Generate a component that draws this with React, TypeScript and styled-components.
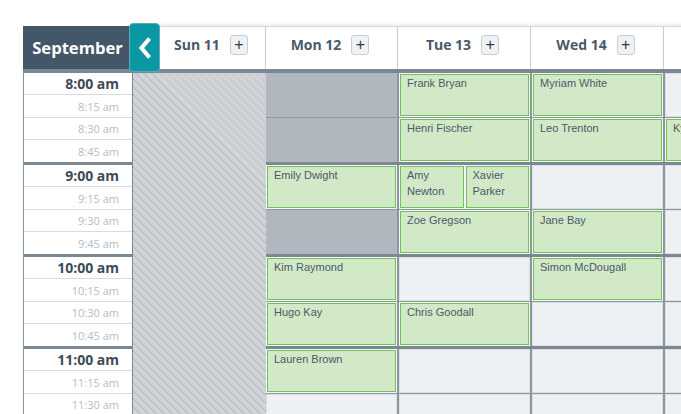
import React from "react";
import styled, { createGlobalStyle } from "styled-components";

const GlobalStyle = createGlobalStyle`
  html, body { margin: 0; padding: 0; background: #ffffff; }
  * { box-sizing: border-box; }
`;

const Page = styled.div`
  width: 681px;
  height: 414px;
  overflow: hidden;
  padding: 26px 0 0 23px;
  font-family: "Open Sans", "Liberation Sans", sans-serif;
`;

const Calendar = styled.div`
  display: flex;
  flex-direction: column;
  width: max-content;
`;

const HeaderRow = styled.div`
  display: flex;
  height: 47px;
  border-bottom: 4px solid #7b8793;
`;

const MonthCell = styled.div`
  width: 106px;
  flex-shrink: 0;
  background: #445768;
  color: #ffffff;
  font-weight: 700;
  font-size: 16.6px;
  display: flex;
  align-items: center;
  justify-content: center;
  padding-left: 3px;
`;

const NavButton = styled.button`
  position: relative;
  z-index: 2;
  flex-shrink: 0;
  align-self: flex-start;
  width: 31px;
  height: 49px;
  margin-top: -3px;
  padding: 0;
  border: 1px solid #5fa9b0;
  border-radius: 4px;
  background: #0a98a4;
  display: flex;
  align-items: center;
  justify-content: center;
  cursor: pointer;
`;

const ChevronIcon = styled.svg`
  display: block;
  width: 18px;
  height: 26px;
  flex-shrink: 0;
`;

const DayHeader = styled.div<{ $width: number }>`
  width: ${(p) => p.$width}px;
  flex-shrink: 0;
  background: #ffffff;
  border-top: 1px solid #d3d7db;
  border-right: 1px solid #cdd2d6;
  box-shadow: 0 -2px 3px rgba(0, 0, 0, 0.07), 1px 0 0 #eef0f2;
  display: flex;
  align-items: center;
  justify-content: center;
  gap: 10px;
  padding: 0 3px 7px 0;
  color: #4a5968;
  font-weight: 700;
  font-size: 14px;
`;

const AddButton = styled.span`
  width: 18px;
  height: 20px;
  border: 1px solid #c9ced3;
  border-radius: 3px;
  background: #eff2f4;
  color: #2f3a45;
  font-family: "Liberation Sans", Arial, sans-serif;
  font-weight: 400;
  font-size: 16px;
  line-height: 17px;
  text-align: center;
`;

const Body = styled.div`
  display: flex;
  align-items: stretch;
`;

const TimeColumn = styled.div`
  width: 110px;
  flex-shrink: 0;
  background: #ffffff;
  border-left: 1px solid #8a949e;
  border-right: 1px solid #7b8793;
  display: flex;
  flex-direction: column;
`;

const HourBlock = styled.div<{ $first: boolean }>`
  display: flex;
  flex-direction: column;
  border-top: ${(p) => (p.$first ? "0" : "3px solid #7b8793")};
`;

const Slot = styled.div<{ $h: number; $last: boolean; $hour: boolean }>`
  height: ${(p) => p.$h}px;
  border-bottom: ${(p) => (p.$last ? "0" : "1px solid #d9dcdf")};
  display: flex;
  align-items: center;
  justify-content: flex-end;
  padding-right: 13px;
  font-size: ${(p) => (p.$hour ? "14px" : "11px")};
  font-weight: ${(p) => (p.$hour ? 700 : 400)};
  color: ${(p) => (p.$hour ? "#3e4b58" : "#b7bbc0")};
  white-space: nowrap;
`;

const ClosedColumn = styled.div`
  width: 133px;
  flex-shrink: 0;
  background: repeating-linear-gradient(
    45deg,
    #d0d4d8 0px,
    #d0d4d8 4.8px,
    #bcc1c6 4.8px,
    #bcc1c6 5.66px
  );
`;

const DayColumn = styled.div`
  width: 133px;
  flex-shrink: 0;
  background: #8e969d;
  display: flex;
  flex-direction: column;
`;

const HalfRow = styled.div`
  display: flex;
  flex-direction: column;
  gap: 1px;
`;

type Kind = "empty" | "blocked" | "event";

const Cell = styled.div<{ $kind: Kind }>`
  width: 131px;
  height: 44px;
  display: flex;
  gap: 2px;
  padding: ${(p) => (p.$kind === "event" ? "1px" : "0")};
  background: ${(p) =>
    p.$kind === "blocked" ? "#b1b7be" : p.$kind === "event" ? "#f4f6f7" : "#eef1f4"};
  border: ${(p) => (p.$kind === "empty" ? "1px solid #dce0e3" : "0")};
`;

const Event = styled.div`
  flex: 1;
  min-width: 0;
  background: #d1e9c6;
  border: 1px solid #72c05a;
  padding: 0 6px;
  font-family: "Liberation Sans", Arial, sans-serif;
  font-size: 11px;
  line-height: 16px;
  color: #4b5a69;
  overflow: hidden;
`;

const Chevron = () => (
  <ChevronIcon viewBox="0 0 18 26" aria-hidden="true">
    <polyline
      points="13.5,3.5 5.5,13 13.5,22.5"
      fill="none"
      stroke="#ffffff"
      strokeWidth="4.2"
      strokeLinecap="butt"
      strokeLinejoin="miter"
    />
  </ChevronIcon>
);

const hours = ["8", "9", "10", "11"];
const quarters = ["00", "15", "30", "45"];
const slotHeights = [22, 23, 22, 22];

type CellData = { kind: Kind; names?: string[] };
const E = (...names: string[]): CellData => ({ kind: "event", names });
const X: CellData = { kind: "empty" };
const B: CellData = { kind: "blocked" };

const days: { label: string; width: number; cells: CellData[] }[] = [
  {
    label: "Mon 12",
    width: 132,
    cells: [B, B, E("Emily Dwight"), B, E("Kim Raymond"), E("Hugo Kay"), E("Lauren Brown"), X],
  },
  {
    label: "Tue 13",
    width: 133,
    cells: [
      E("Frank Bryan"),
      E("Henri Fischer"),
      E("Amy Newton", "Xavier Parker"),
      E("Zoe Gregson"),
      X,
      E("Chris Goodall"),
      X,
      X,
    ],
  },
  {
    label: "Wed 14",
    width: 133,
    cells: [
      E("Myriam White"),
      E("Leo Trenton"),
      X,
      E("Jane Bay"),
      E("Simon McDougall"),
      X,
      X,
      X,
    ],
  },
  {
    label: "Thu 15",
    width: 133,
    cells: [X, E("Kyle Simmons"), X, X, X, X, X, X],
  },
];

export default function App() {
  return (
    <>
      <GlobalStyle />
      <Page>
        <Calendar>
          <HeaderRow>
            <MonthCell>September</MonthCell>
            <NavButton aria-label="Previous">
              <Chevron />
            </NavButton>
            <DayHeader $width={106}>
              Sun 11<AddButton>+</AddButton>
            </DayHeader>
            {days.map((d) => (
              <DayHeader key={d.label} $width={d.width}>
                {d.label}
                <AddButton>+</AddButton>
              </DayHeader>
            ))}
          </HeaderRow>
          <Body>
            <TimeColumn>
              {hours.map((h, hi) => (
                <HourBlock key={h} $first={hi === 0}>
                  {quarters.map((q, qi) => (
                    <Slot key={q} $h={slotHeights[qi]} $last={qi === 3} $hour={qi === 0}>
                      {h}:{q} am
                    </Slot>
                  ))}
                </HourBlock>
              ))}
            </TimeColumn>
            <ClosedColumn />
            {days.map((d) => (
              <DayColumn key={d.label}>
                {hours.map((h, hi) => (
                  <HourBlock key={h} $first={hi === 0}>
                    <HalfRow>
                      {[0, 1].map((half) => {
                        const c = d.cells[hi * 2 + half];
                        return (
                          <Cell key={half} $kind={c.kind}>
                            {c.names?.map((n) => (
                              <Event key={n}>{n}</Event>
                            ))}
                          </Cell>
                        );
                      })}
                    </HalfRow>
                  </HourBlock>
                ))}
              </DayColumn>
            ))}
          </Body>
        </Calendar>
      </Page>
    </>
  );
}
